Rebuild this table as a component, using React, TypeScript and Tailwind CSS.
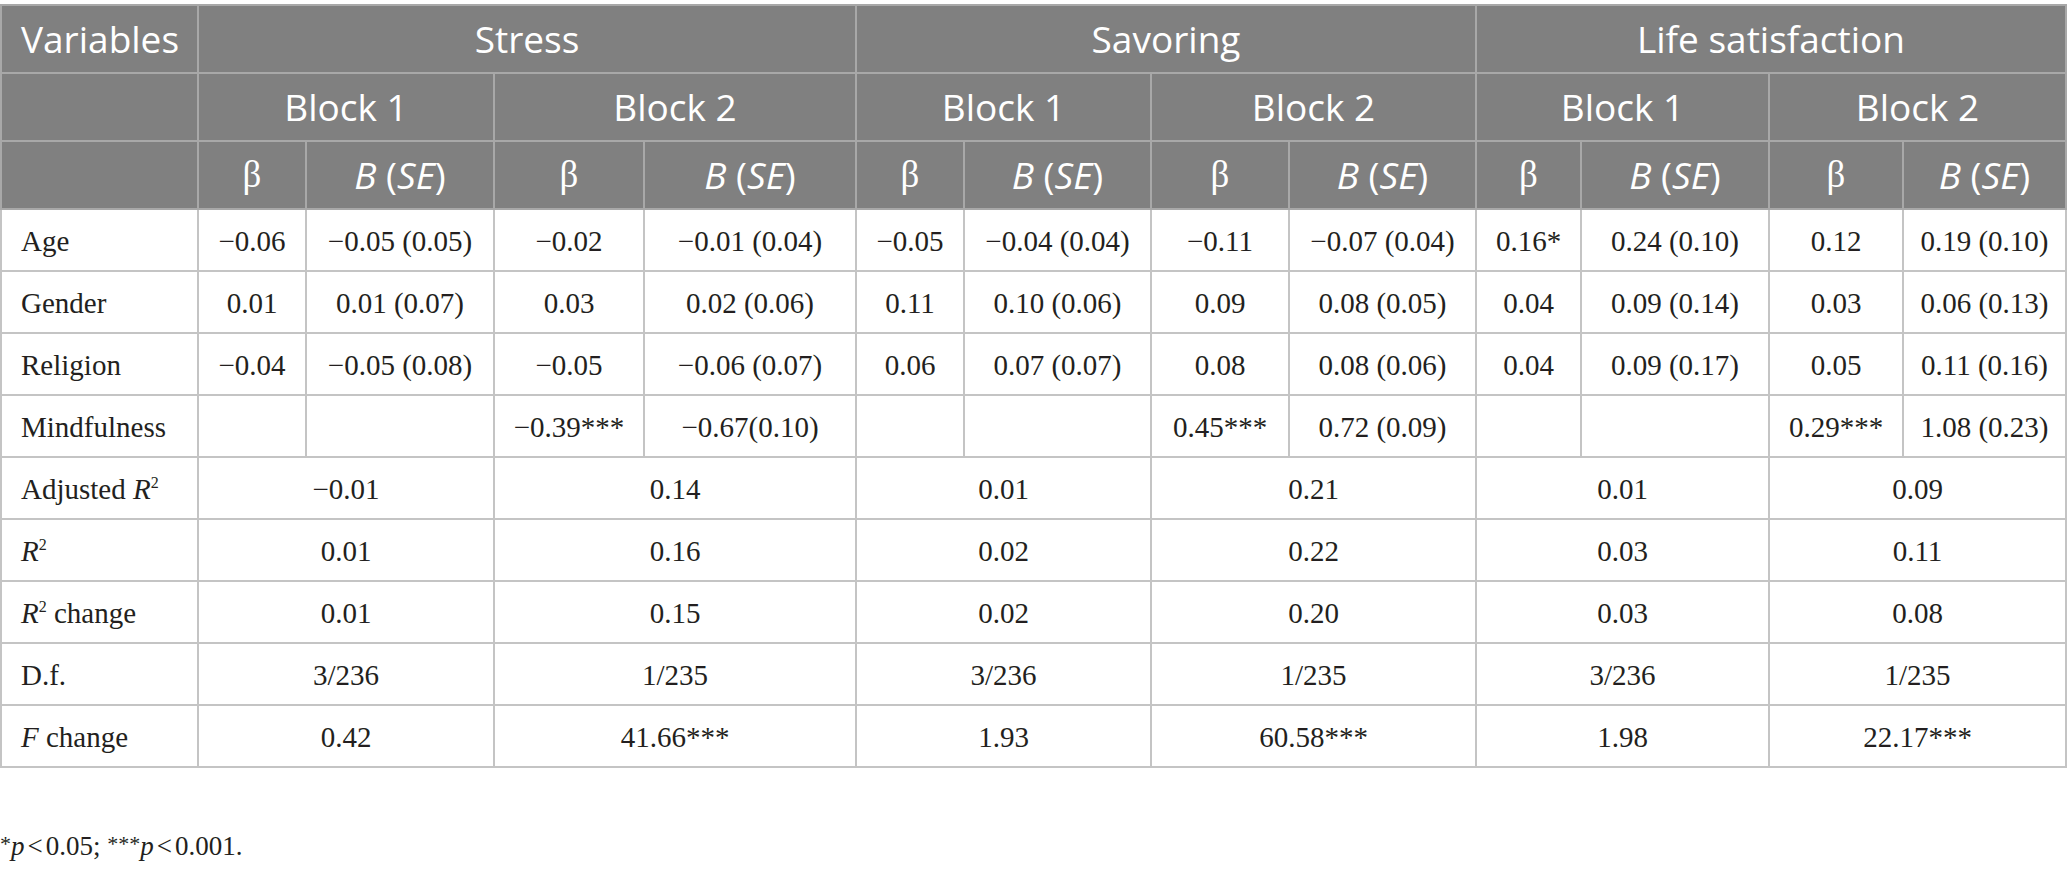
import React from 'react';

// Regression table: stress, savoring and life satisfaction by block
const cols =
  'grid-cols-[195px_106px_186px_148px_210px_106px_185px_136px_185px_103px_186px_132px_161px]';

const serif = "font-['Liberation_Serif','Times_New_Roman',serif]";
const sans = "font-['Open_Sans','Noto_Sans',sans-serif]";

const Sup: React.FC<{ children: React.ReactNode }> = ({ children }) => (
  <span className="relative -top-[11px] text-[16px] align-baseline">{children}</span>
);

const coefRows: { label: React.ReactNode; cells: string[] }[] = [
  {
    label: 'Age',
    cells: ['−0.06', '−0.05 (0.05)', '−0.02', '−0.01 (0.04)', '−0.05', '−0.04 (0.04)', '−0.11', '−0.07 (0.04)', '0.16*', '0.24 (0.10)', '0.12', '0.19 (0.10)'],
  },
  {
    label: 'Gender',
    cells: ['0.01', '0.01 (0.07)', '0.03', '0.02 (0.06)', '0.11', '0.10 (0.06)', '0.09', '0.08 (0.05)', '0.04', '0.09 (0.14)', '0.03', '0.06 (0.13)'],
  },
  {
    label: 'Religion',
    cells: ['−0.04', '−0.05 (0.08)', '−0.05', '−0.06 (0.07)', '0.06', '0.07 (0.07)', '0.08', '0.08 (0.06)', '0.04', '0.09 (0.17)', '0.05', '0.11 (0.16)'],
  },
  {
    label: 'Mindfulness',
    cells: ['', '', '−0.39***', '−0.67(0.10)', '', '', '0.45***', '0.72 (0.09)', '', '', '0.29***', '1.08 (0.23)'],
  },
];

const fitRows: { label: React.ReactNode; cells: string[] }[] = [
  {
    label: (
      <span>
        Adjusted <i>R</i>
        <Sup>2</Sup>
      </span>
    ),
    cells: ['−0.01', '0.14', '0.01', '0.21', '0.01', '0.09'],
  },
  {
    label: (
      <span>
        <i>R</i>
        <Sup>2</Sup>
      </span>
    ),
    cells: ['0.01', '0.16', '0.02', '0.22', '0.03', '0.11'],
  },
  {
    label: (
      <span>
        <i>R</i>
        <Sup>2</Sup> change
      </span>
    ),
    cells: ['0.01', '0.15', '0.02', '0.20', '0.03', '0.08'],
  },
  { label: 'D.f.', cells: ['3/236', '1/235', '3/236', '1/235', '3/236', '1/235'] },
  {
    label: (
      <span>
        <i>F</i> change
      </span>
    ),
    cells: ['0.42', '41.66***', '1.93', '60.58***', '1.98', '22.17***'],
  },
];

const HeadCell: React.FC<{ className?: string; children?: React.ReactNode }> = ({ className = '', children }) => (
  <div className={`bg-[#808080] text-white flex items-center justify-center ${className}`}>{children}</div>
);

const BodyCell: React.FC<{ className?: string; children?: React.ReactNode }> = ({ className = '', children }) => (
  <div className={`bg-white flex items-center justify-center pt-[3px] ${className}`}>{children}</div>
);

export default function App() {
  return (
    <div className="min-h-screen w-[2067px] bg-white text-[#231f20]">
      {/* Header rows */}
      <div className={`mt-[4px] grid ${cols} grid-rows-[66px_66px_66px] gap-[2px] p-[2px] bg-[#a8a8a8] ${sans} text-[37px]`}>
        <HeadCell className="justify-start pl-[19px]">Variables</HeadCell>
        <HeadCell className="col-span-4">Stress</HeadCell>
        <HeadCell className="col-span-4">Savoring</HeadCell>
        <HeadCell className="col-span-4">Life satisfaction</HeadCell>

        <HeadCell />
        {[0, 1, 2].map((g) => (
          <React.Fragment key={g}>
            <HeadCell className="col-span-2">Block 1</HeadCell>
            <HeadCell className="col-span-2">Block 2</HeadCell>
          </React.Fragment>
        ))}

        <HeadCell />
        {[0, 1, 2, 3, 4, 5].map((i) => (
          <React.Fragment key={i}>
            <HeadCell className={`${serif} text-[37px]`}>β</HeadCell>
            <HeadCell>
              <span>
                <i>B</i> (<i>SE</i>)
              </span>
            </HeadCell>
          </React.Fragment>
        ))}
      </div>

      {/* Body rows */}
      <div className={`grid ${cols} auto-rows-[60px] gap-[2px] px-[2px] pb-[2px] bg-[#c4c4c4] ${serif} text-[29px]`}>
        {coefRows.map((row, r) => (
          <React.Fragment key={r}>
            <BodyCell className="justify-start pl-[19px]">{row.label}</BodyCell>
            {row.cells.map((c, i) => (
              <BodyCell key={i}>{c}</BodyCell>
            ))}
          </React.Fragment>
        ))}
        {fitRows.map((row, r) => (
          <React.Fragment key={`f${r}`}>
            <BodyCell className="justify-start pl-[19px]">{row.label}</BodyCell>
            {row.cells.map((c, i) => (
              <BodyCell key={i} className="col-span-2">
                {c}
              </BodyCell>
            ))}
          </React.Fragment>
        ))}
      </div>

      {/* Footnote */}
      <p className={`mt-[62px] ${serif} text-[27px] leading-[32px]`}>
        <span className="relative -top-[4px] text-[22px]">*</span>
        <i>p</i>
        <span className="mx-[3px]">&lt;</span>0.05; <span className="relative -top-[4px] text-[22px]">***</span>
        <i>p</i>
        <span className="mx-[3px]">&lt;</span>0.001.
      </p>
    </div>
  );
}
